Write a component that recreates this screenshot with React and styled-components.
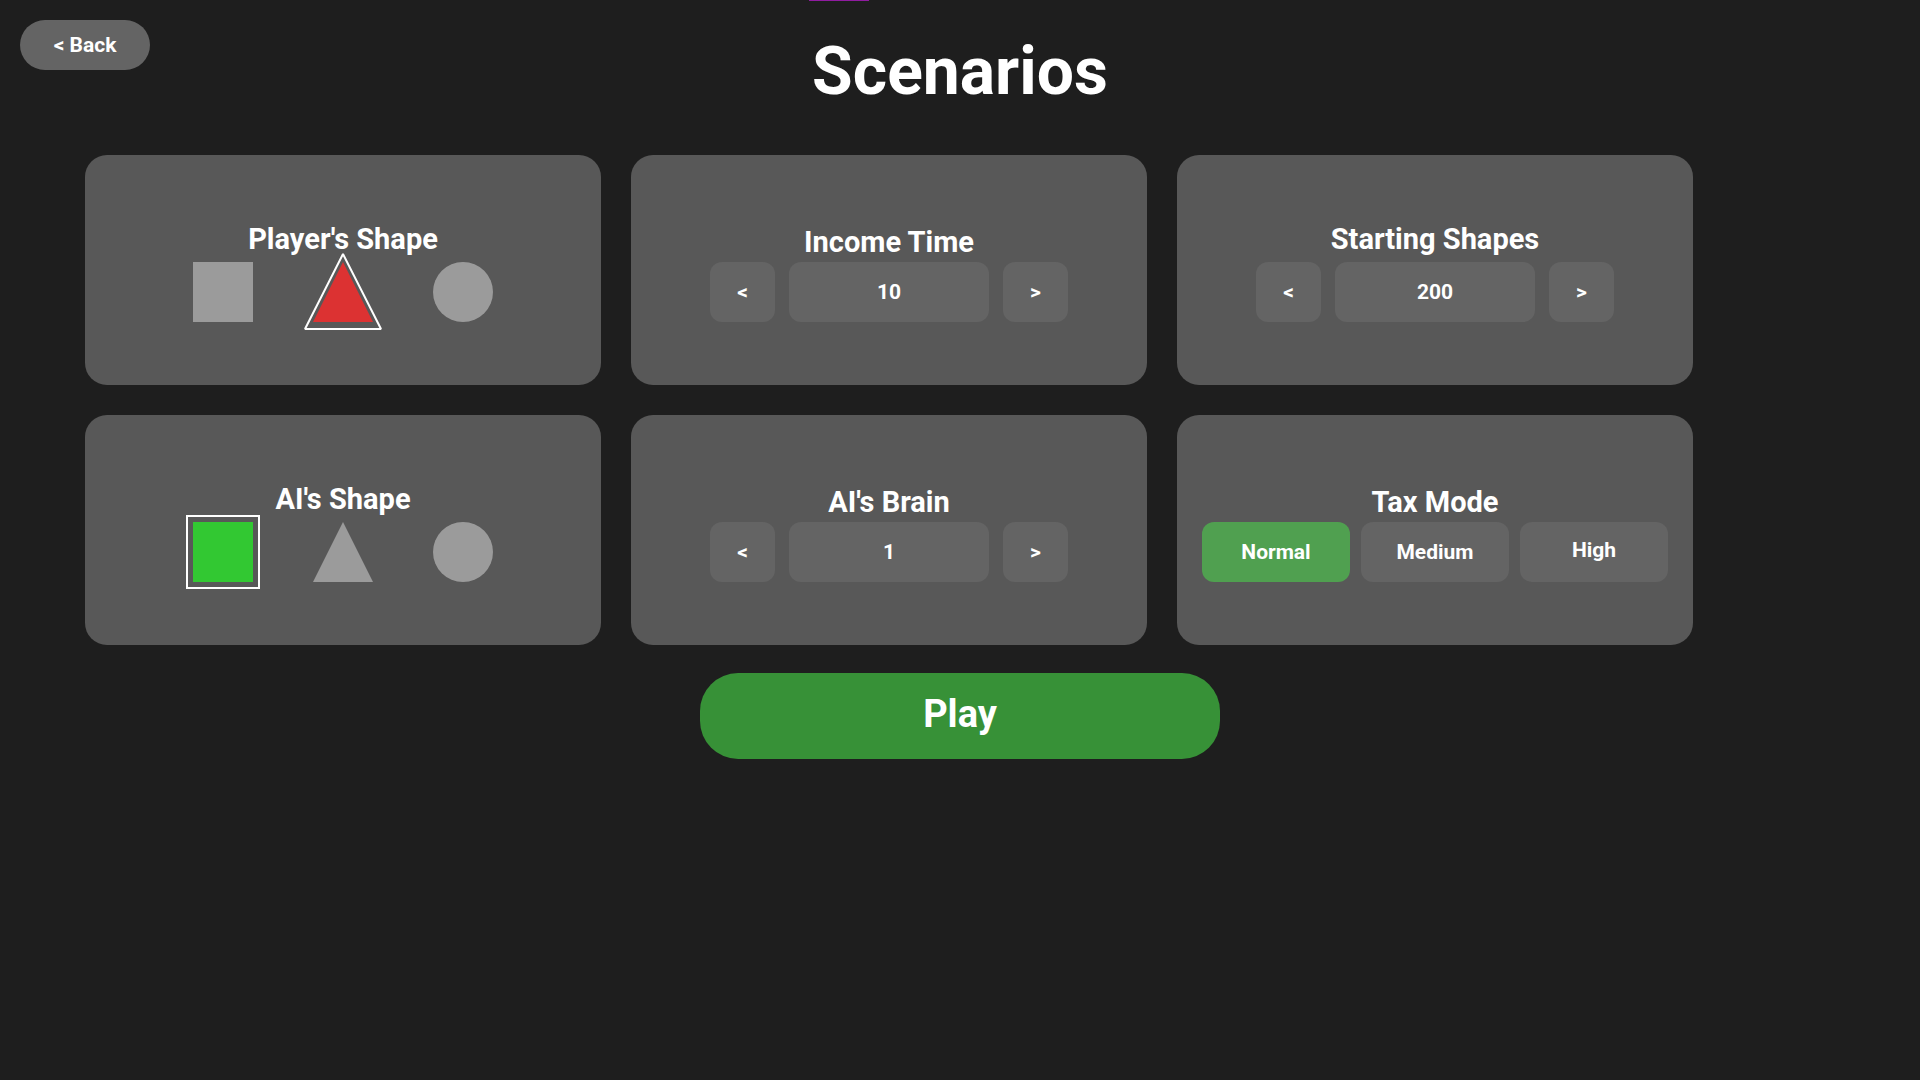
import React, { useState } from "react";
import styled, { createGlobalStyle } from "styled-components";

const GlobalStyle = createGlobalStyle`
  *, *::before, *::after { box-sizing: border-box; }
  body {
    margin: 0;
    background: #1e1e1e;
    color: #ffffff;
    font-family: Roboto, "Liberation Sans", sans-serif;
    font-weight: 700;
  }
  button {
    font: inherit;
    color: inherit;
    border: 0;
    padding: 0;
    cursor: pointer;
  }
`;

const Screen = styled.div`
  position: relative;
  min-height: 100vh;
  overflow: hidden;
`;

/* Edge of the banner parked just above the top of the window. */
const ParkedBanner = styled.div`
  position: absolute;
  top: 0;
  left: calc(50% - 151px);
  width: 60px;
  height: 1px;
  background: #901ca0;
`;

const Header = styled.header`
  display: grid;
  grid-template-columns: 1fr auto 1fr;
  align-items: start;
  padding: 20px 20px 31px;
`;

const BackButton = styled.button`
  width: 130px;
  height: 50px;
  border-radius: 25px;
  background: #646464;
  font-size: 21px;
  line-height: 24px;
`;

const Title = styled.h1`
  margin: 0;
  font-size: 66px;
  line-height: 104px;
  font-weight: 700;
`;

const OptionGrid = styled.main`
  display: grid;
  grid-template-columns: repeat(3, minmax(0, 1fr));
  gap: 30px;
  padding: 0 227px 0 85px;
`;

const Card = styled.section`
  display: flex;
  flex-direction: column;
  align-items: center;
  padding: 67px 24px 63px;
  border-radius: 22px;
  background: #585858;
`;

/* Words with descenders are centred on their full ink height, so they ride a little higher. */
const hasDescender = (text) => /[gjpqy]/.test(text);

const CardTitle = styled.h2`
  display: flex;
  align-items: center;
  height: 40px;
  margin: 0;
  padding-bottom: ${(p) => (p.$raised ? 6 : 0)}px;
  font-size: 29px;
  line-height: 32px;
  font-weight: 700;
`;

const Controls = styled.div`
  display: flex;
  justify-content: center;
  gap: ${(p) => p.$gap}px;
`;

const StepButton = styled.button`
  width: 65px;
  height: 60px;
  border-radius: 12px;
  background: #646464;
  font-size: 21px;
  line-height: 24px;
`;

const StepValue = styled.output`
  display: flex;
  align-items: center;
  justify-content: center;
  width: 200px;
  height: 60px;
  border-radius: 12px;
  background: #646464;
  font-size: 21px;
  line-height: 24px;
`;

const ModeButton = styled.button`
  width: 148px;
  height: 60px;
  padding-bottom: ${(p) => (p.$raised ? 4 : 0)}px;
  border-radius: 12px;
  background: ${(p) => (p.$active ? "#50a050" : "#646464")};
  font-size: 21px;
  line-height: 24px;
`;

const ShapeOption = styled.label`
  position: relative;
  width: 60px;
  height: 60px;
  cursor: pointer;
`;

const ShapeRadio = styled.input`
  position: absolute;
  inset: 0;
  width: 100%;
  height: 100%;
  margin: 0;
  opacity: 0;
  cursor: pointer;
`;

const ShapeDrawing = styled.svg`
  display: block;
  overflow: visible;
`;

const Footer = styled.footer`
  display: flex;
  justify-content: center;
  padding: 28px 20px;
`;

const PlayButton = styled.button`
  width: 520px;
  height: 86px;
  padding-bottom: 4px;
  border-radius: 38px;
  background: #379137;
  font-size: 38px;
  line-height: 44px;
`;

const SHAPES = ["square", "triangle", "circle"];
const SHAPE_COLORS = { square: "#32c832", triangle: "#dc3232", circle: "#3278dc" };

function Shape({ kind, selected }) {
  const fill = selected ? SHAPE_COLORS[kind] : "#9b9b9b";
  const outline = { fill: "none", stroke: "#ffffff", strokeWidth: 2 };
  return (
    <ShapeDrawing width="60" height="60" viewBox="0 0 60 60" aria-hidden="true">
      {kind === "square" && (
        <>
          <rect width="60" height="60" fill={fill} />
          {selected && <rect x="-6" y="-6" width="72" height="72" {...outline} />}
        </>
      )}
      {kind === "triangle" && (
        <>
          <polygon points="30,0 60,60 0,60" fill={fill} />
          {selected && (
            <polygon points="30,-8 68,67 -8,67" strokeLinejoin="bevel" {...outline} />
          )}
        </>
      )}
      {kind === "circle" && (
        <>
          <circle cx="30" cy="30" r="30" fill={fill} />
          {selected && <circle cx="30" cy="30" r="36" {...outline} />}
        </>
      )}
    </ShapeDrawing>
  );
}

function OptionCard({ title, gap, children }) {
  return (
    <Card aria-label={title}>
      <CardTitle $raised={hasDescender(title)}>{title}</CardTitle>
      <Controls $gap={gap}>{children}</Controls>
    </Card>
  );
}

function ShapeCard({ title, name, initial }) {
  const [value, setValue] = useState(initial);
  return (
    <OptionCard title={title} gap={60}>
      {SHAPES.map((kind) => (
        <ShapeOption key={kind}>
          <ShapeRadio
            type="radio"
            name={name}
            value={kind}
            aria-label={kind}
            checked={value === kind}
            onChange={() => setValue(kind)}
          />
          <Shape kind={kind} selected={value === kind} />
        </ShapeOption>
      ))}
    </OptionCard>
  );
}

function StepperCard({ title, initial, step }) {
  const [value, setValue] = useState(initial);
  return (
    <OptionCard title={title} gap={14}>
      <StepButton type="button" onClick={() => setValue(Math.max(step, value - step))}>
        &lt;
      </StepButton>
      <StepValue>{value}</StepValue>
      <StepButton type="button" onClick={() => setValue(value + step)}>
        &gt;
      </StepButton>
    </OptionCard>
  );
}

function TaxCard() {
  const [mode, setMode] = useState("Normal");
  return (
    <OptionCard title="Tax Mode" gap={11}>
      {["Normal", "Medium", "High"].map((name) => (
        <ModeButton
          key={name}
          type="button"
          aria-pressed={mode === name}
          $active={mode === name}
          $raised={hasDescender(name)}
          onClick={() => setMode(name)}
        >
          {name}
        </ModeButton>
      ))}
    </OptionCard>
  );
}

export default function App() {
  return (
    <Screen>
      <GlobalStyle />
      <ParkedBanner />
      <Header>
        <BackButton type="button">&lt; Back</BackButton>
        <Title>Scenarios</Title>
      </Header>
      <OptionGrid>
        <ShapeCard title="Player's Shape" name="player-shape" initial="triangle" />
        <StepperCard title="Income Time" initial={10} step={1} />
        <StepperCard title="Starting Shapes" initial={200} step={50} />
        <ShapeCard title="AI's Shape" name="ai-shape" initial="square" />
        <StepperCard title="AI's Brain" initial={1} step={1} />
        <TaxCard />
      </OptionGrid>
      <Footer>
        <PlayButton type="button">Play</PlayButton>
      </Footer>
    </Screen>
  );
}
